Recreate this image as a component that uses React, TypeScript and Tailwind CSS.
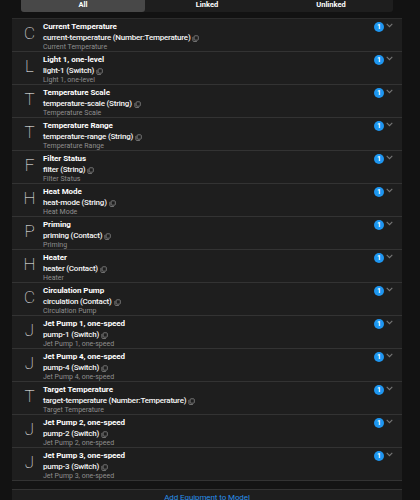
import React from "react";

const rows: [string, string, string, string, string][] = [
  ["C", "Current Temperature", "current-temperature", "Number:Temperature", "Current Temperature"],
  ["L", "Light 1, one-level", "light-1", "Switch", "Light 1, one-level"],
  ["T", "Temperature Scale", "temperature-scale", "String", "Temperature Scale"],
  ["T", "Temperature Range", "temperature-range", "String", "Temperature Range"],
  ["F", "Filter Status", "filter", "String", "Filter Status"],
  ["H", "Heat Mode", "heat-mode", "String", "Heat Mode"],
  ["P", "Priming", "priming", "Contact", "Priming"],
  ["H", "Heater", "heater", "Contact", "Heater"],
  ["C", "Circulation Pump", "circulation", "Contact", "Circulation Pump"],
  ["J", "Jet Pump 1, one-speed", "pump-1", "Switch", "Jet Pump 1, one-speed"],
  ["J", "Jet Pump 4, one-speed", "pump-4", "Switch", "Jet Pump 4, one-speed"],
  ["T", "Target Temperature", "target-temperature", "Number:Temperature", "Target Temperature"],
  ["J", "Jet Pump 2, one-speed", "pump-2", "Switch", "Jet Pump 2, one-speed"],
  ["J", "Jet Pump 3, one-speed", "pump-3", "Switch", "Jet Pump 3, one-speed"],
];

function CopyIcon() {
  return (
    <svg width="7" height="7" viewBox="0 0 8 8" fill="none" stroke="#8a8a8a" strokeWidth="0.9" className="ml-[2px] shrink-0 mt-[1px]">
      <rect x="2.4" y="0.9" width="4.8" height="5" rx="1" />
      <path d="M1 2.2v4a1.2 1.2 0 0 0 1.2 1.2h3.4" />
    </svg>
  );
}

function Chevron() {
  return (
    <svg width="7" height="5" viewBox="0 0 7 5" fill="none" stroke="#777" strokeWidth="1.1">
      <path d="M0.7 0.9l2.8 2.8 2.8-2.8" />
    </svg>
  );
}

function Row({ r }: { r: [string, string, string, string, string] }) {
  return (
    <div className="flex h-[33px] shrink-0 border-b border-[#333333]">
      <div className="w-[31px] shrink-0 flex justify-center pl-[4px] pt-[2px] text-[17px] leading-[24px] font-thin text-white">{r[0]}</div>
      <div className="flex-1 min-w-0 flex flex-col pt-[3px]">
        <div className="text-[8px] leading-[10px] font-bold text-white tracking-[-0.06px]">{r[1]}</div>
        <div className="flex items-center text-[8px] leading-[10px] font-medium text-[#f5f5f5] mt-[1px] tracking-[-0.22px]">
          <span>{r[2]} ({r[3]})</span>
          <CopyIcon />
        </div>
        <div className="text-[7px] leading-[9px] text-[#8e8e8e]">{r[4]}</div>
      </div>
      <div className="flex items-start gap-[2px] pt-[3px] pr-[9px]">
        <div className="w-[10px] h-[10px] rounded-full bg-[#1e96f0] text-white text-[7px] leading-[10px] font-bold text-center">1</div>
        <div className="mt-[1px]"><Chevron /></div>
      </div>
    </div>
  );
}

export default function App() {
  return (
    <div className="w-[420px] h-[500px] overflow-hidden bg-[#121212] flex flex-col" style={{ fontFamily: 'Roboto, "Noto Sans", sans-serif' }}>
      <div className="h-[12px] shrink-0 mx-[21px] w-[372px] grid grid-cols-3 bg-[#1e1e1e] rounded-b-[3px] text-[7.5px] leading-[9px] font-bold text-white">
        <div className="bg-[#484848] rounded-b-[3px] text-center">All</div>
        <div className="text-center">Linked</div>
        <div className="text-center">Unlinked</div>
      </div>
      <div className="h-[6px] shrink-0" />
      <div className="ml-[12px] w-[390px] flex-1">
        <div className="border-t border-[#2c2c2c] bg-[#1e1e1e] flex flex-col">
          {rows.map((r, i) => <Row key={i} r={r} />)}
        </div>
        <div className="h-[8px] bg-[#141414]" />
        <div className="border-t border-[#333333] bg-[#1e1e1e] text-center text-[8px] leading-[15px] tracking-[-0.1px] text-[#2a8fe8] h-[20px]">Add Equipment to Model</div>
      </div>
    </div>
  );
}
